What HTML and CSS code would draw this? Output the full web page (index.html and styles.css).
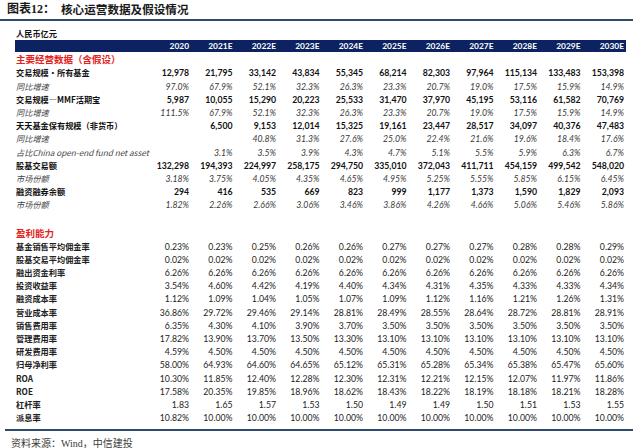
FILE: index.html
```html
<!DOCTYPE html>
<html lang="zh">
<head>
<meta charset="utf-8">
<link rel="stylesheet" href="styles.css">
</head>
<body>
<div class="title"><span class="fig">图表12：</span><span class="name">核心运营数据及假设情况</span></div>
<div class="rule rule-top"></div>
<div class="unit">人民币亿元</div>
<div class="table">
  <div class="row head"><span></span><span>2020</span><span>2021E</span><span>2022E</span><span>2023E</span><span>2024E</span><span>2025E</span><span>2026E</span><span>2027E</span><span>2028E</span><span>2029E</span><span>2030E</span></div>
  <div class="row section first"><span class="lbl">主要经营数据（含假设）</span></div>
  <div class="row num"><span class="lbl">交易规模·所有基金</span><span>12,978</span><span>21,795</span><span>33,142</span><span>43,834</span><span>55,345</span><span>68,214</span><span>82,303</span><span>97,964</span><span>115,134</span><span>133,483</span><span>153,398</span></div>
  <div class="row pct"><span class="lbl">同比增速</span><span>97.0%</span><span>67.9%</span><span>52.1%</span><span>32.3%</span><span>26.3%</span><span>23.3%</span><span>20.7%</span><span>19.0%</span><span>17.5%</span><span>15.9%</span><span>14.9%</span></div>
  <div class="row num"><span class="lbl">交易规模—MMF活期宝</span><span>5,987</span><span>10,055</span><span>15,290</span><span>20,223</span><span>25,533</span><span>31,470</span><span>37,970</span><span>45,195</span><span>53,116</span><span>61,582</span><span>70,769</span></div>
  <div class="row pct"><span class="lbl">同比增速</span><span>111.5%</span><span>67.9%</span><span>52.1%</span><span>32.3%</span><span>26.3%</span><span>23.3%</span><span>20.7%</span><span>19.0%</span><span>17.5%</span><span>15.9%</span><span>14.9%</span></div>
  <div class="row num"><span class="lbl">天天基金保有规模（非货币）</span><span></span><span>6,500</span><span>9,153</span><span>12,014</span><span>15,325</span><span>19,161</span><span>23,447</span><span>28,517</span><span>34,097</span><span>40,376</span><span>47,483</span></div>
  <div class="row pct"><span class="lbl">同比增速</span><span></span><span></span><span>40.8%</span><span>31.3%</span><span>27.6%</span><span>25.0%</span><span>22.4%</span><span>21.6%</span><span>19.6%</span><span>18.4%</span><span>17.6%</span></div>
  <div class="row pct"><span class="lbl">占比China open-end fund net asset</span><span></span><span>3.1%</span><span>3.5%</span><span>3.9%</span><span>4.3%</span><span>4.7%</span><span>5.1%</span><span>5.5%</span><span>5.9%</span><span>6.3%</span><span>6.7%</span></div>
  <div class="row num"><span class="lbl">股基交易额</span><span>132,298</span><span>194,393</span><span>224,997</span><span>258,175</span><span>294,750</span><span>335,010</span><span>372,043</span><span>411,711</span><span>454,159</span><span>499,542</span><span>548,020</span></div>
  <div class="row pct"><span class="lbl">市场份额</span><span>3.18%</span><span>3.75%</span><span>4.05%</span><span>4.35%</span><span>4.65%</span><span>4.95%</span><span>5.25%</span><span>5.55%</span><span>5.85%</span><span>6.15%</span><span>6.45%</span></div>
  <div class="row num"><span class="lbl">融资融券余额</span><span>294</span><span>416</span><span>535</span><span>669</span><span>823</span><span>999</span><span>1,177</span><span>1,373</span><span>1,590</span><span>1,829</span><span>2,093</span></div>
  <div class="row pct"><span class="lbl">市场份额</span><span>1.82%</span><span>2.26%</span><span>2.66%</span><span>3.06%</span><span>3.46%</span><span>3.86%</span><span>4.26%</span><span>4.66%</span><span>5.06%</span><span>5.46%</span><span>5.86%</span></div>
  <div class="row blank"></div>
  <div class="row section"><span class="lbl">盈利能力</span></div>
  <div class="row ratio"><span class="lbl">基金销售平均佣金率</span><span>0.23%</span><span>0.23%</span><span>0.25%</span><span>0.26%</span><span>0.26%</span><span>0.27%</span><span>0.27%</span><span>0.27%</span><span>0.28%</span><span>0.28%</span><span>0.29%</span></div>
  <div class="row ratio"><span class="lbl">股基交易平均佣金率</span><span>0.02%</span><span>0.02%</span><span>0.02%</span><span>0.02%</span><span>0.02%</span><span>0.02%</span><span>0.02%</span><span>0.02%</span><span>0.02%</span><span>0.02%</span><span>0.02%</span></div>
  <div class="row ratio"><span class="lbl">融出资金利率</span><span>6.26%</span><span>6.26%</span><span>6.26%</span><span>6.26%</span><span>6.26%</span><span>6.26%</span><span>6.26%</span><span>6.26%</span><span>6.26%</span><span>6.26%</span><span>6.26%</span></div>
  <div class="row ratio"><span class="lbl">投资收益率</span><span>3.54%</span><span>4.60%</span><span>4.42%</span><span>4.19%</span><span>4.40%</span><span>4.34%</span><span>4.31%</span><span>4.35%</span><span>4.33%</span><span>4.33%</span><span>4.34%</span></div>
  <div class="row ratio"><span class="lbl">融资成本率</span><span>1.12%</span><span>1.09%</span><span>1.04%</span><span>1.05%</span><span>1.07%</span><span>1.09%</span><span>1.12%</span><span>1.16%</span><span>1.21%</span><span>1.26%</span><span>1.31%</span></div>
  <div class="row ratio"><span class="lbl">营业成本率</span><span>36.86%</span><span>29.72%</span><span>29.46%</span><span>29.14%</span><span>28.81%</span><span>28.49%</span><span>28.55%</span><span>28.64%</span><span>28.72%</span><span>28.81%</span><span>28.91%</span></div>
  <div class="row ratio"><span class="lbl">销售费用率</span><span>6.35%</span><span>4.30%</span><span>4.10%</span><span>3.90%</span><span>3.70%</span><span>3.50%</span><span>3.50%</span><span>3.50%</span><span>3.50%</span><span>3.50%</span><span>3.50%</span></div>
  <div class="row ratio"><span class="lbl">管理费用率</span><span>17.82%</span><span>13.90%</span><span>13.70%</span><span>13.50%</span><span>13.30%</span><span>13.10%</span><span>13.10%</span><span>13.10%</span><span>13.10%</span><span>13.10%</span><span>13.10%</span></div>
  <div class="row ratio"><span class="lbl">研发费用率</span><span>4.59%</span><span>4.50%</span><span>4.50%</span><span>4.50%</span><span>4.50%</span><span>4.50%</span><span>4.50%</span><span>4.50%</span><span>4.50%</span><span>4.50%</span><span>4.50%</span></div>
  <div class="row ratio"><span class="lbl">归母净利率</span><span>58.00%</span><span>64.93%</span><span>64.60%</span><span>64.65%</span><span>65.12%</span><span>65.31%</span><span>65.28%</span><span>65.34%</span><span>65.38%</span><span>65.47%</span><span>65.60%</span></div>
  <div class="row ratio"><span class="lbl">ROA</span><span>10.30%</span><span>11.85%</span><span>12.40%</span><span>12.28%</span><span>12.30%</span><span>12.31%</span><span>12.21%</span><span>12.15%</span><span>12.07%</span><span>11.97%</span><span>11.86%</span></div>
  <div class="row ratio"><span class="lbl">ROE</span><span>17.58%</span><span>20.35%</span><span>19.85%</span><span>18.96%</span><span>18.62%</span><span>18.43%</span><span>18.22%</span><span>18.19%</span><span>18.18%</span><span>18.21%</span><span>18.28%</span></div>
  <div class="row ratio"><span class="lbl">杠杆率</span><span>1.83</span><span>1.65</span><span>1.57</span><span>1.53</span><span>1.50</span><span>1.49</span><span>1.49</span><span>1.50</span><span>1.51</span><span>1.53</span><span>1.55</span></div>
  <div class="row ratio"><span class="lbl">派息率</span><span>10.82%</span><span>10.00%</span><span>10.00%</span><span>10.00%</span><span>10.00%</span><span>10.00%</span><span>10.00%</span><span>10.00%</span><span>10.00%</span><span>10.00%</span><span>10.00%</span></div>
</div>
<div class="rule rule-bottom"></div>
<div class="source">资料来源：Wind，中信建投</div>
</body>
</html>
```

FILE: styles.css
```css
html, body {
  margin: 0;
  padding: 0;
  background: #ffffff;
}
body {
  width: 640px;
  height: 448px;
  overflow: hidden;
  font-family: "Lato", "Noto Sans CJK SC", sans-serif;
  color: #111111;
}
.title {
  height: 19px;
  line-height: 19px;
  padding-left: 7px;
  font-family: "Liberation Serif", "Noto Sans CJK SC", serif;
  font-weight: bold;
  font-size: 12px;
  color: #1a1a1a;
  display: flex;
}
.title .fig {
  width: 54px;
}
.title .name {
  font-family: "Noto Sans CJK SC", sans-serif;
  font-size: 11.6px;
}
.rule {
  height: 2px;
  background: #2c4a6e;
}
.rule-top {
  width: 633px;
}
.rule-bottom {
  width: 628px;
  margin-left: 5px;
  margin-top: 5px;
}
.unit {
  padding-top: 5px;
  padding-left: 16px;
  height: 14px;
  line-height: 14px;
  font-family: "Noto Sans CJK SC", sans-serif;
  font-weight: bold;
  font-size: 8.2px;
  color: #111111;
}
.table {
  margin-left: 15px;
  width: 611px;
}
.row {
  display: grid;
  grid-template-columns: 132.5px repeat(11, 43.5px);
  height: 13.2px;
  line-height: 13.2px;
  font-size: 8.7px;
  white-space: nowrap;
}
.row > span {
  text-align: right;
  padding-right: 2px;
}
.row > .lbl {
  text-align: left;
  padding-left: 1px;
  font-family: "Noto Sans CJK SC", sans-serif;
  font-size: 8.2px;
  font-weight: bold;
  overflow: visible;
}
.head {
  height: 12px;
  line-height: 12px;
  background: #0d2260;
  color: #ffffff;
  font-weight: bold;
  font-size: 8.4px;
}
.section {
  height: 14px;
  line-height: 14px;
}
.section.first {
  height: 14.4px;
  line-height: 14.4px;
}
.section > .lbl {
  color: #e3221c;
  font-size: 9.5px;
}
.num {
  font-weight: bold;
  color: #111111;
}
.pct {
  font-style: italic;
  color: #3a3a3a;
}
.pct > .lbl {
  font-weight: normal;
  font-style: italic;
  color: #444444;
}
.ratio {
  color: #222222;
}
.blank {
  height: 14.2px;
}
.source {
  margin-top: 7px;
  padding-left: 11px;
  height: 12px;
  line-height: 12px;
  font-family: "Liberation Serif", "Noto Sans CJK SC", serif;
  font-size: 10px;
  color: #3a3a3a;
}
```
